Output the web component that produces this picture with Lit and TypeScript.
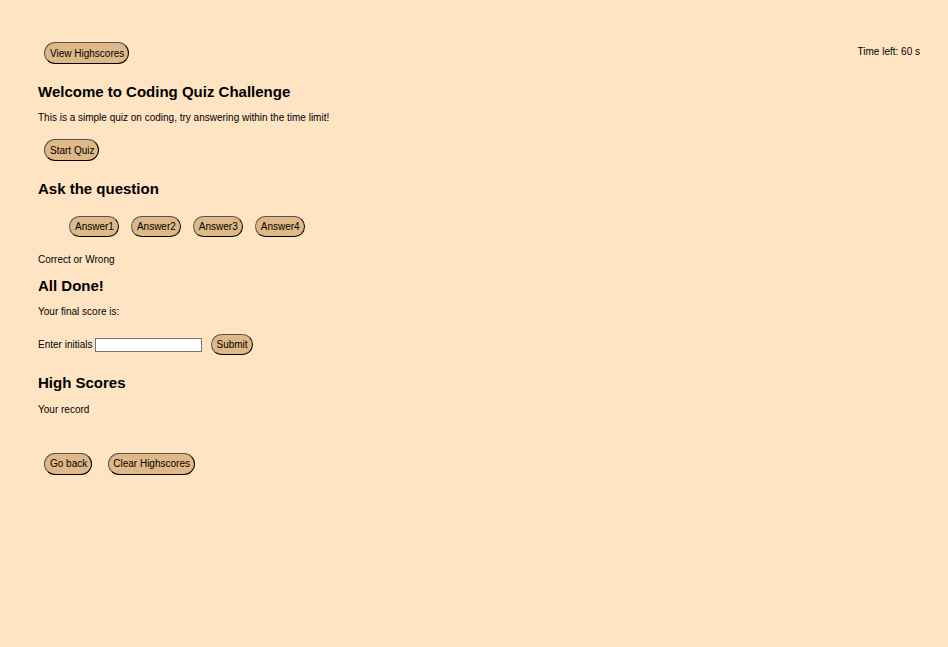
import { LitElement, html, css } from "lit";
import { customElement, property, state } from "lit/decorators.js";

@customElement("app-root")
export class AppRoot extends LitElement {
  static styles = css`
    :host {
      display: block;
      box-sizing: border-box;
      min-height: 100vh;
      padding: 42px 28px 42px 38px;
      background: bisque;
      color: black;
      font-family: Arial, "Liberation Sans", sans-serif;
      font-size: 10px;
      line-height: 12px;
    }
    h2 {
      margin: 0;
      font-size: 15px;
      line-height: 20px;
    }
    p {
      margin: 0;
    }
    button {
      box-sizing: border-box;
      height: 22px;
      padding: 0 4px 0 5px;
      border: 1px outset black;
      border-radius: 11px;
      background: burlywood;
      color: black;
      font: inherit;
    }
    .lead {
      padding-top: 2px;
    }
    .compact {
      display: block;
      height: 21px;
    }
    .tight {
      padding: 0 4px;
    }
    .bar {
      display: flex;
      justify-content: space-between;
      padding-left: 6px;
    }
    .time {
      padding-top: 4px;
    }
    .section {
      display: flex;
      flex-direction: column;
      align-items: flex-start;
      margin-top: 18px;
    }
    .text {
      margin-top: 10px;
    }
    .actions {
      display: flex;
      gap: 16px;
      margin-top: 15px;
      padding-left: 6px;
    }
    .answers {
      display: flex;
      gap: 12px;
      margin: 17px 0 0;
      padding: 0 0 0 31px;
      list-style: none;
    }
    .result {
      margin-top: 17px;
    }
    .done {
      margin-top: 10px;
    }
    .entry {
      display: flex;
      align-items: center;
      margin-top: 16px;
    }
    .initials {
      box-sizing: border-box;
      width: 107px;
      height: 14px;
      margin: 0 9px 0 3px;
      padding: 0 2px;
      border: 1px solid #767676;
      background: white;
      font: inherit;
    }
    .record {
      margin-top: 11px;
    }
    .footer {
      margin-top: 37px;
    }
  `;

  @property({ type: Number }) seconds = 60;

  @state() private answers = ["Answer1", "Answer2", "Answer3", "Answer4"];

  render() {
    return html`
      <header class="bar">
        <button class="lead" type="button">View Highscores</button>
        <p class="time">Time left: ${this.seconds} s</p>
      </header>
      <main>
        <section class="section">
          <h2>Welcome to Coding Quiz Challenge</h2>
          <p class="text">This is a simple quiz on coding, try answering within the time limit!</p>
          <div class="actions"><button class="lead" type="button">Start Quiz</button></div>
        </section>
        <section class="section">
          <h2>Ask the question</h2>
          <ul class="answers">
            ${this.answers.map((a) => html`<li><button class="compact" type="button">${a}</button></li>`)}
          </ul>
          <p class="result">Correct or Wrong</p>
        </section>
        <section class="section done">
          <h2>All Done!</h2>
          <p class="text">Your final score is:</p>
          <form class="entry" @submit=${(e: Event) => e.preventDefault()}>
            <label for="initials">Enter initials</label>
            <input class="initials" id="initials" type="text" />
            <button class="compact tight" type="submit">Submit</button>
          </form>
        </section>
        <section class="section">
          <h2>High Scores</h2>
          <p class="record">Your record</p>
          <div class="actions footer">
            <button type="button">Go back</button>
            <button class="tight" type="button">Clear Highscores</button>
          </div>
        </section>
      </main>
    `;
  }
}
